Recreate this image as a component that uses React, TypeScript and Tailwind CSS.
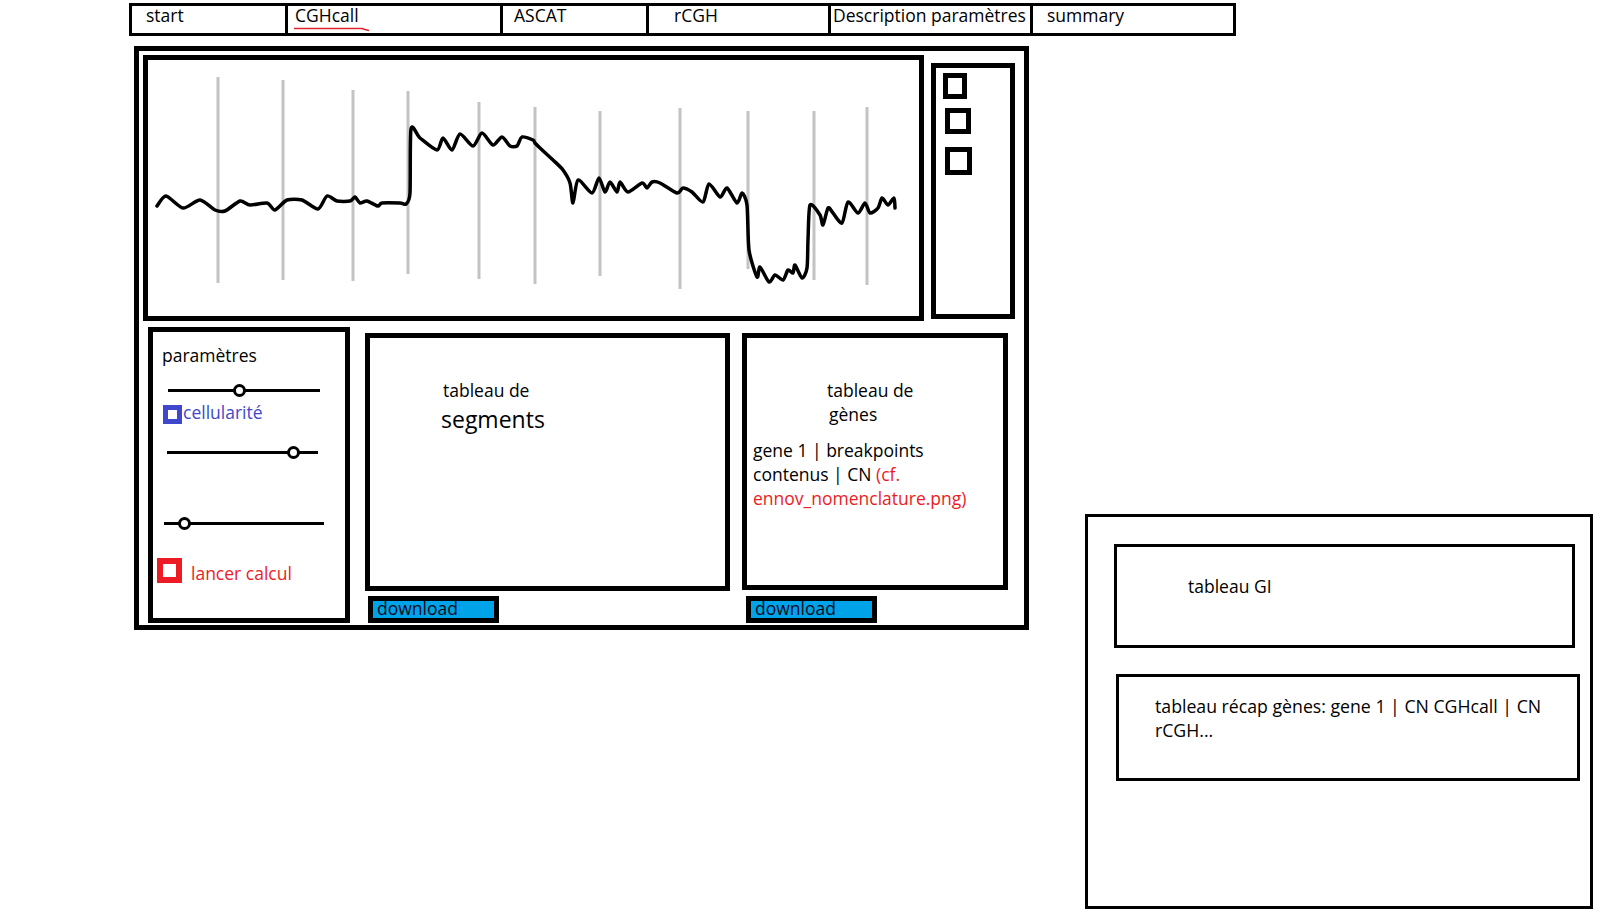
import React from "react"

const tabs = [
  { label: "start", w: "w-[156px]", pl: "pl-[14px]" },
  { label: "CGHcall", w: "w-[215px]", pl: "pl-[7px]", spell: true },
  { label: "ASCAT", w: "w-[146px]", pl: "pl-[11px]" },
  { label: "rCGH", w: "w-[182px]", pl: "pl-[25px]" },
  { label: "Description paramètres", w: "w-[202px]", pl: "pl-[2px]" },
  { label: "summary", w: "w-[200px]", pl: "pl-[14px]" },
]

const gridLines: [number, number, number][] = [
  [218, 77, 283],
  [283, 80, 280],
  [353, 90, 281],
  [408, 91, 274],
  [479, 102, 279],
  [535, 107, 284],
  [600, 111, 276],
  [680, 108, 289],
  [748, 111, 269],
  [814, 111, 280],
  [867, 107, 285],
]

const wave = [
  [157, 206], [166, 196], [183, 208], [200, 200], [215, 210], [225, 211], [240, 201], [250, 205],
  [267, 203], [275, 210], [287, 200], [302, 200], [318, 209], [327, 196], [337, 201], [350, 201],
  [355, 197], [360, 203], [367, 201], [378, 206], [382, 203], [400, 203], [406, 204], [410, 193],
  [411, 129], [420, 138], [437, 150], [443, 138], [452, 150], [460, 134], [473, 146], [482, 133],
  [493, 145], [502, 137], [510, 146], [517, 146], [522, 137], [533, 140], [535, 143], [540, 148],
  [553, 160], [563, 170], [570, 183], [573, 203], [578, 180], [592, 193], [599, 178], [605, 192],
  [610, 182], [617, 192], [620, 182], [628, 192], [642, 183], [647, 188], [652, 182], [660, 183],
  [677, 193], [683, 188], [692, 192], [703, 202], [709, 184], [720, 197], [727, 188], [737, 203],
  [742, 193], [747, 205], [749, 250], [757, 277], [760, 267], [769, 282], [775, 275], [783, 280],
  [788, 270], [793, 273], [795, 265], [802, 278], [807, 268], [808, 240], [810, 205], [820, 215],
  [823, 225], [828, 208], [833, 213], [842, 223], [848, 202], [858, 213], [865, 203], [870, 213],
  [878, 208], [882, 198], [888, 205], [894, 198], [895, 208],
]

// smooth the hand-drawn trace a little (catmull-rom, low tension)
function smooth(pts: number[][]) {
  let d = `M${pts[0][0]} ${pts[0][1]}`
  for (let i = 0; i < pts.length - 1; i++) {
    const p0 = pts[i - 1] || pts[i]
    const p1 = pts[i]
    const p2 = pts[i + 1]
    const p3 = pts[i + 2] || p2
    const k = 8
    const c1x = p1[0] + (p2[0] - p0[0]) / k
    const c1y = p1[1] + (p2[1] - p0[1]) / k
    const c2x = p2[0] - (p3[0] - p1[0]) / k
    const c2y = p2[1] - (p3[1] - p1[1]) / k
    d += ` C${c1x.toFixed(1)} ${c1y.toFixed(1)} ${c2x.toFixed(1)} ${c2y.toFixed(1)} ${p2[0]} ${p2[1]}`
  }
  return d
}

function Slider({ className, knob }: { className: string; knob: number }) {
  return (
    <div className={`relative h-[14px] flex items-center ${className}`}>
      <div className="h-[3px] w-full bg-black" />
      <div
        className="absolute top-[1px] w-[13px] h-[13px] rounded-full border-[3px] border-black bg-white"
        style={{ left: knob - 6 }}
      />
    </div>
  )
}

function Download() {
  return (
    <div className="w-[131px] h-[27px] border-[5px] border-black bg-[#00a2e8] overflow-hidden">
      <div className="pl-[4px] leading-[15px] text-[17.5px] text-[#0a0a1a]">download</div>
    </div>
  )
}

export default function App() {
  const d = smooth(wave)
  return (
    <div className="w-[1615px] h-[919px] bg-white overflow-hidden font-['Open_Sans',sans-serif] text-black text-[17.5px]">
      {/* Tabs */}
      <nav className="ml-[129px] mt-[3px] w-[1107px] h-[33px] border-[3px] border-black flex">
        {tabs.map((t, i) => (
          <div
            key={t.label}
            className={`relative h-full ${t.w} ${t.pl} leading-[18px] whitespace-nowrap ${i < tabs.length - 1 ? "border-r-[3px] border-black" : ""}`}
          >
            {t.label}
            {t.spell && (
              <svg className="absolute left-[6px] top-[21px]" width="76" height="5">
                <path d="M0 1.5 L68 1.5 L71 2.5 L75 3.5" stroke="#e0202a" strokeWidth="1.5" fill="none" />
              </svg>
            )}
          </div>
        ))}
      </nav>

      <div className="flex items-start">
        {/* Main panel */}
        <div className="ml-[134px] mt-[10px] w-[895px] h-[584px] border-[5px] border-black">
          <div className="flex items-start">
            <div className="ml-[4px] mt-[4px] w-[781px] h-[266px] border-[5px] border-black">
              <svg width="771" height="256" viewBox="148 60 771 256">
                {gridLines.map(([x, y1, y2]) => (
                  <line key={x} x1={x} y1={y1} x2={x} y2={y2} stroke="#c3c3c3" strokeWidth="3" />
                ))}
                <path d={d} stroke="#000" strokeWidth="3.5" fill="none" strokeLinejoin="round" strokeLinecap="round" />
              </svg>
            </div>
            <div className="ml-[7px] mt-[12px] w-[84px] h-[256px] border-[5px] border-black flex flex-col">
              <div className="ml-[7px] mt-[5px] w-[24px] h-[26px] border-[5px] border-black" />
              <div className="ml-[9px] mt-[9px] w-[26px] h-[26px] border-[5px] border-black" />
              <div className="ml-[9px] mt-[13px] w-[27px] h-[28px] border-[5px] border-black" />
            </div>
          </div>

          <div className="flex items-start">
            {/* Parameters */}
            <div className="ml-[9px] mt-[6px] w-[202px] h-[296px] border-[5px] border-black flex flex-col">
              <div className="mt-[11px] ml-[9px] leading-[24px]">paramètres</div>
              <Slider className="mt-[16px] ml-[15px] w-[152px]" knob={71} />
              <div className="mt-[8px] ml-[10px] flex items-start">
                <div className="w-[19px] h-[19px] border-[5px] border-[#3f48cc]" />
                <span className="ml-[1px] leading-[14px] text-[#3f48cc]">cellularité</span>
              </div>
              <Slider className="mt-[21px] ml-[14px] w-[151px]" knob={126} />
              <Slider className="mt-[57px] ml-[11px] w-[160px]" knob={20} />
              <div className="mt-[28px] ml-[4px] flex items-start">
                <div className="w-[25px] h-[25px] border-[6px] border-[#ed1c24]" />
                <span className="ml-[9px] leading-[30px] text-[#ed1c24]">lancer calcul</span>
              </div>
            </div>

            {/* Segments */}
            <div className="ml-[15px] mt-[12px] flex flex-col">
              <div className="w-[365px] h-[258px] border-[5px] border-black">
                <div className="pt-[40px] pl-[73px] leading-[24px]">tableau de</div>
                <div className="mt-[3px] pl-[71px] leading-[28px] text-[23px]">segments</div>
              </div>
              <div className="mt-[5px] ml-[3px]">
                <Download />
              </div>
            </div>

            {/* Genes */}
            <div className="ml-[12px] mt-[12px] flex flex-col">
              <div className="w-[266px] h-[257px] border-[5px] border-black">
                <div className="pt-[40px] pl-[80px] leading-[24px]">tableau de</div>
                <div className="pl-[82px] leading-[24px]">gènes</div>
                <div className="mt-[12px] pl-[6px] leading-[24px]">
                  gene 1 | breakpoints
                  <br />
                  contenus | CN <span className="text-[#ed1c24]">(cf.</span>
                  <br />
                  <span className="text-[#ed1c24]">ennov_nomenclature.png)</span>
                </div>
              </div>
              <div className="mt-[6px] ml-[4px]">
                <Download />
              </div>
            </div>
          </div>
        </div>

        {/* Summary panel */}
        <div className="ml-[56px] mt-[478px] w-[508px] h-[395px] border-[3px] border-black flex flex-col">
          <div className="ml-[26px] mt-[27px] w-[461px] h-[104px] border-[3px] border-black">
            <div className="pt-[27px] pl-[71px] leading-[24px]">tableau GI</div>
          </div>
          <div className="ml-[28px] mt-[26px] w-[464px] h-[107px] border-[3px] border-black">
            <div className="pt-[17px] pl-[36px] leading-[24px] text-[17.7px]">
              tableau récap gènes: gene 1 | CN CGHcall | CN
              <br />
              rCGH...
            </div>
          </div>
        </div>
      </div>
    </div>
  )
}
